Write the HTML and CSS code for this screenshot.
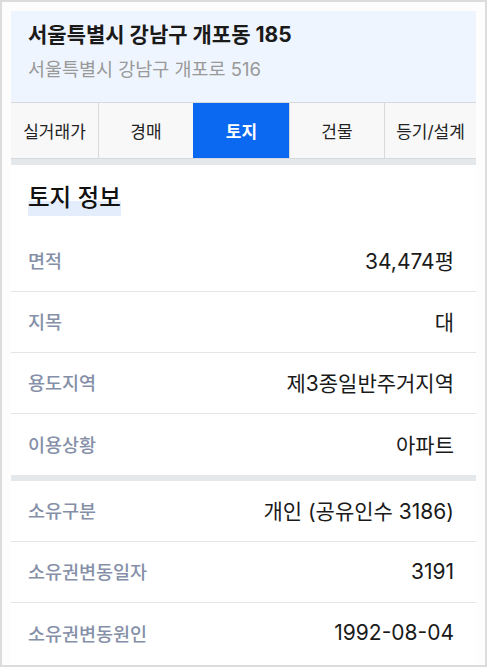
FILE: index.html
```html
<!DOCTYPE html>
<html lang="ko">
<head>
    <meta charset="UTF-8">
    <meta name="viewport" content="width=device-width, initial-scale=1.0">
    <title>토지 정보</title>
    <link rel="stylesheet" href="styles.css">
</head>
<body>
    <div class="frame">
        <div class="property-card">
            <div class="property-header">
                <h1 class="property-title">서울특별시 강남구 개포동 185</h1>
                <p class="property-road">서울특별시 강남구 개포로 516</p>
            </div>

            <nav class="tab-bar">
                <a class="tab tab-first">실거래가</a>
                <a class="tab tab-second">경매</a>
                <a class="tab tab-third active">토지</a>
                <a class="tab tab-fourth">건물</a>
                <a class="tab tab-last">등기/설계</a>
            </nav>

            <div class="band"></div>

            <section class="info-section">
                <div class="section-title"><span>토지 정보</span></div>
                <div class="info-row">
                    <span class="info-label">면적</span>
                    <span class="info-value">34,474평</span>
                </div>
                <div class="info-row">
                    <span class="info-label">지목</span>
                    <span class="info-value">대</span>
                </div>
                <div class="info-row">
                    <span class="info-label">용도지역</span>
                    <span class="info-value">제3종일반주거지역</span>
                </div>
                <div class="info-row">
                    <span class="info-label">이용상황</span>
                    <span class="info-value">아파트</span>
                </div>
            </section>

            <div class="band"></div>

            <section class="info-section">
                <div class="info-row">
                    <span class="info-label">소유구분</span>
                    <span class="info-value">개인 (공유인수 3186)</span>
                </div>
                <div class="info-row">
                    <span class="info-label">소유권변동일자</span>
                    <span class="info-value">3191</span>
                </div>
                <div class="info-row">
                    <span class="info-label">소유권변동원인</span>
                    <span class="info-value">1992-08-04</span>
                </div>
            </section>
        </div>
    </div>
</body>
</html>
```

FILE: styles.css
```css
html, body {
    margin: 0;
    padding: 0;
}

body {
    font-family: Inter, "Noto Sans CJK KR", sans-serif;
    color: #1e1e1e;
    background: #fff;
}

.frame {
    height: 667px;
    box-sizing: border-box;
    border: 2px solid #dcdcdc;
    padding: 9px 9px 0;
    background: #fdfdfd;
    overflow: hidden;
}

.property-card {
    background: #fff;
}

.property-header {
    height: 91px;
    box-sizing: border-box;
    padding: 12px 17px 0;
    background: #eff5fe;
}

.property-title {
    margin: 0;
    font-size: 21px;
    line-height: 24px;
    font-weight: 700;
    color: #1a1a1a;
}

.property-road {
    margin: 10px 0 0;
    font-size: 18.5px;
    line-height: 24px;
    color: #999;
}

.tab-bar {
    display: flex;
    border-top: 1px solid #d6d9dd;
    border-bottom: 1px solid #d6d9dd;
    background: #f8f8f8;
}

.tab {
    height: 55px;
    display: flex;
    align-items: center;
    justify-content: center;
    box-sizing: border-box;
    font-size: 17px;
    color: #222;
    border-left: 1px solid #d9d9d9;
}

.tab-first {
    width: 87px;
    border-left: none;
}

.tab-second { width: 95px; }
.tab-third { width: 96px; }
.tab-fourth { width: 95px; }
.tab-last { flex: 1; }

.tab.active {
    background: #0b68f0;
    color: #fff;
    font-weight: 700;
    border-left-color: #0b68f0;
}

.band {
    height: 6px;
    background: #e5e8eb;
}

.section-title {
    height: 66px;
    box-sizing: border-box;
    padding: 18px 17px 0;
}

.section-title span {
    display: inline-block;
    font-size: 23.5px;
    line-height: 30px;
    padding-bottom: 3px;
    font-weight: 500;
    color: #111;
    background: linear-gradient(transparent 55%, #e4edfb 55%);
}

.info-row {
    height: 61px;
    box-sizing: border-box;
    display: flex;
    align-items: center;
    justify-content: space-between;
    padding: 0 22px 2px 17px;
    border-bottom: 1px solid #e5e5e5;
}

.info-row:last-child {
    border-bottom: none;
}

.info-label {
    font-size: 18.5px;
    font-weight: 500;
    color: #8590a8;
}

.info-value {
    font-size: 21px;
    color: #1a1a1a;
}
```
